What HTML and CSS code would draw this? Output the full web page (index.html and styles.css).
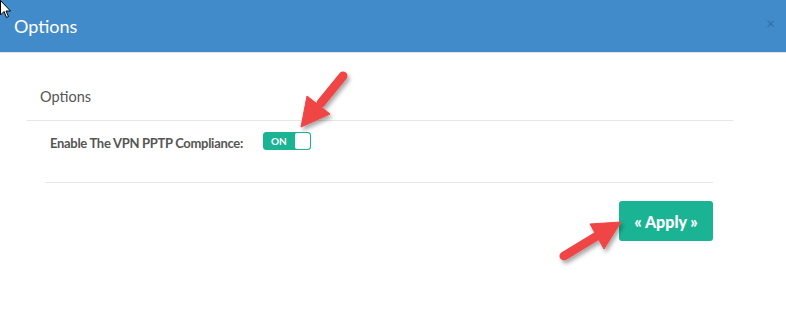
FILE: index.html
```html
<!DOCTYPE html>
<html lang="en">
<head>
  <meta charset="UTF-8" />
  <title>Options</title>
  <link rel="stylesheet" href="styles.css">
</head>
<body>

  <!-- modal -->
  <div class="modal">
    <div class="modal-header">
      <h4 class="modal-title">Options</h4>
      <span class="close">&times;</span>
    </div>

    <div class="modal-body">
      <div class="panel">
        <div class="panel-heading">Options</div>
        <div class="panel-body">
          <div class="form-row">
            <label class="form-label">Enable The VPN PPTP Compliance:</label>
            <span class="switch">
              <span class="switch-on">ON</span>
              <span class="switch-knob"></span>
            </span>
          </div>
          <div class="divider"></div>
          <div class="actions">
            <button class="btn-apply">&laquo; Apply &raquo;</button>
          </div>
        </div>
      </div>
    </div>
  </div>

  <!-- annotation arrows -->
  <svg class="annotations" width="786" height="314" viewBox="0 0 786 314">
    <defs>
      <filter id="shadow" x="-20%" y="-20%" width="140%" height="140%">
        <feDropShadow dx="2" dy="3" stdDeviation="2" flood-color="#000" flood-opacity="0.35" />
      </filter>
    </defs>
    <g filter="url(#shadow)" fill="#f04444" stroke="#f04444">
      <line x1="343" y1="76" x2="321" y2="103" stroke-width="9" stroke-linecap="round" />
      <polygon points="301,127 330,114 307,96" stroke-width="1" stroke-linejoin="round" />
      <line x1="564" y1="256" x2="597" y2="236" stroke-width="9" stroke-linecap="round" />
      <polygon points="621,222 604,249 590,224" stroke-width="1" stroke-linejoin="round" />
    </g>
  </svg>

  <!-- mouse pointer -->
  <svg class="cursor" width="12" height="20" viewBox="0 0 12 20">
    <path d="M0.5 0.5 L0.5 15 L4 11.5 L6.5 17.5 L8.5 16.5 L6 11 L10.5 11 Z" fill="#fff" stroke="#000" stroke-width="1" />
  </svg>
</body>
</html>
```

FILE: styles.css
```css
body {
  margin: 0;
  font-family: 'Lato', 'Open Sans', sans-serif;
  background-color: #fff;
  color: #555;
  width: 786px;
  height: 314px;
  overflow: hidden;
  position: relative;
}
.modal-header {
  height: 52px;
  background-color: #428bca;
  border-bottom: 1px solid #e5e5e5;
  display: flex;
  align-items: center;
  justify-content: space-between;
  padding: 0 14px 0 14px;
}
.modal-title {
  margin: 0;
  font-size: 18px;
  font-weight: 400;
  color: #fff;
  padding-bottom: 1px;
}
.close {
  font-size: 15px;
  color: #2e6fa7;
  margin-right: -3px;
  margin-top: -7px;
}
.modal-body {
  padding: 26px 53px 0 27px;
}
.panel-heading {
  height: 35px;
  line-height: 35px;
  padding-bottom: 6px;
  padding-left: 13px;
  font-size: 14.5px;
  border-bottom: 1px solid #e7e7e7;
}
.panel-body {
  padding: 0 20px 0 18px;
}
.form-row {
  display: flex;
  align-items: center;
  height: 44px;
  padding-left: 5px;
}
.form-label {
  width: 213px;
  font-size: 13px;
  font-weight: 700;
  color: #555;
  letter-spacing: -0.3px;
}
.switch {
  display: flex;
  width: 46px;
  height: 16px;
  border: 1px solid #1ab394;
  border-radius: 3px;
  background-color: #1ab394;
  overflow: hidden;
  margin-top: -4px;
}
.switch-on {
  flex: 1;
  color: #fff;
  font-size: 10px;
  font-weight: 700;
  line-height: 16px;
  padding-left: 7px;
}
.switch-knob {
  width: 15px;
  background-color: #fff;
  border-radius: 2px;
}
.divider {
  border-top: 1px solid #e7e7e7;
  margin-top: 17px;
}
.actions {
  display: flex;
  justify-content: flex-end;
  padding-top: 18px;
}
.btn-apply {
  width: 94px;
  height: 40px;
  border: none;
  border-radius: 3px;
  background-color: #1ab394;
  color: #fff;
  font-family: 'Lato', sans-serif;
  font-size: 16px;
  font-weight: 900;
  cursor: pointer;
}
.annotations {
  position: absolute;
  left: 0;
  top: 0;
  pointer-events: none;
}
.cursor {
  position: absolute;
  left: 0;
  top: 0;
}
```
